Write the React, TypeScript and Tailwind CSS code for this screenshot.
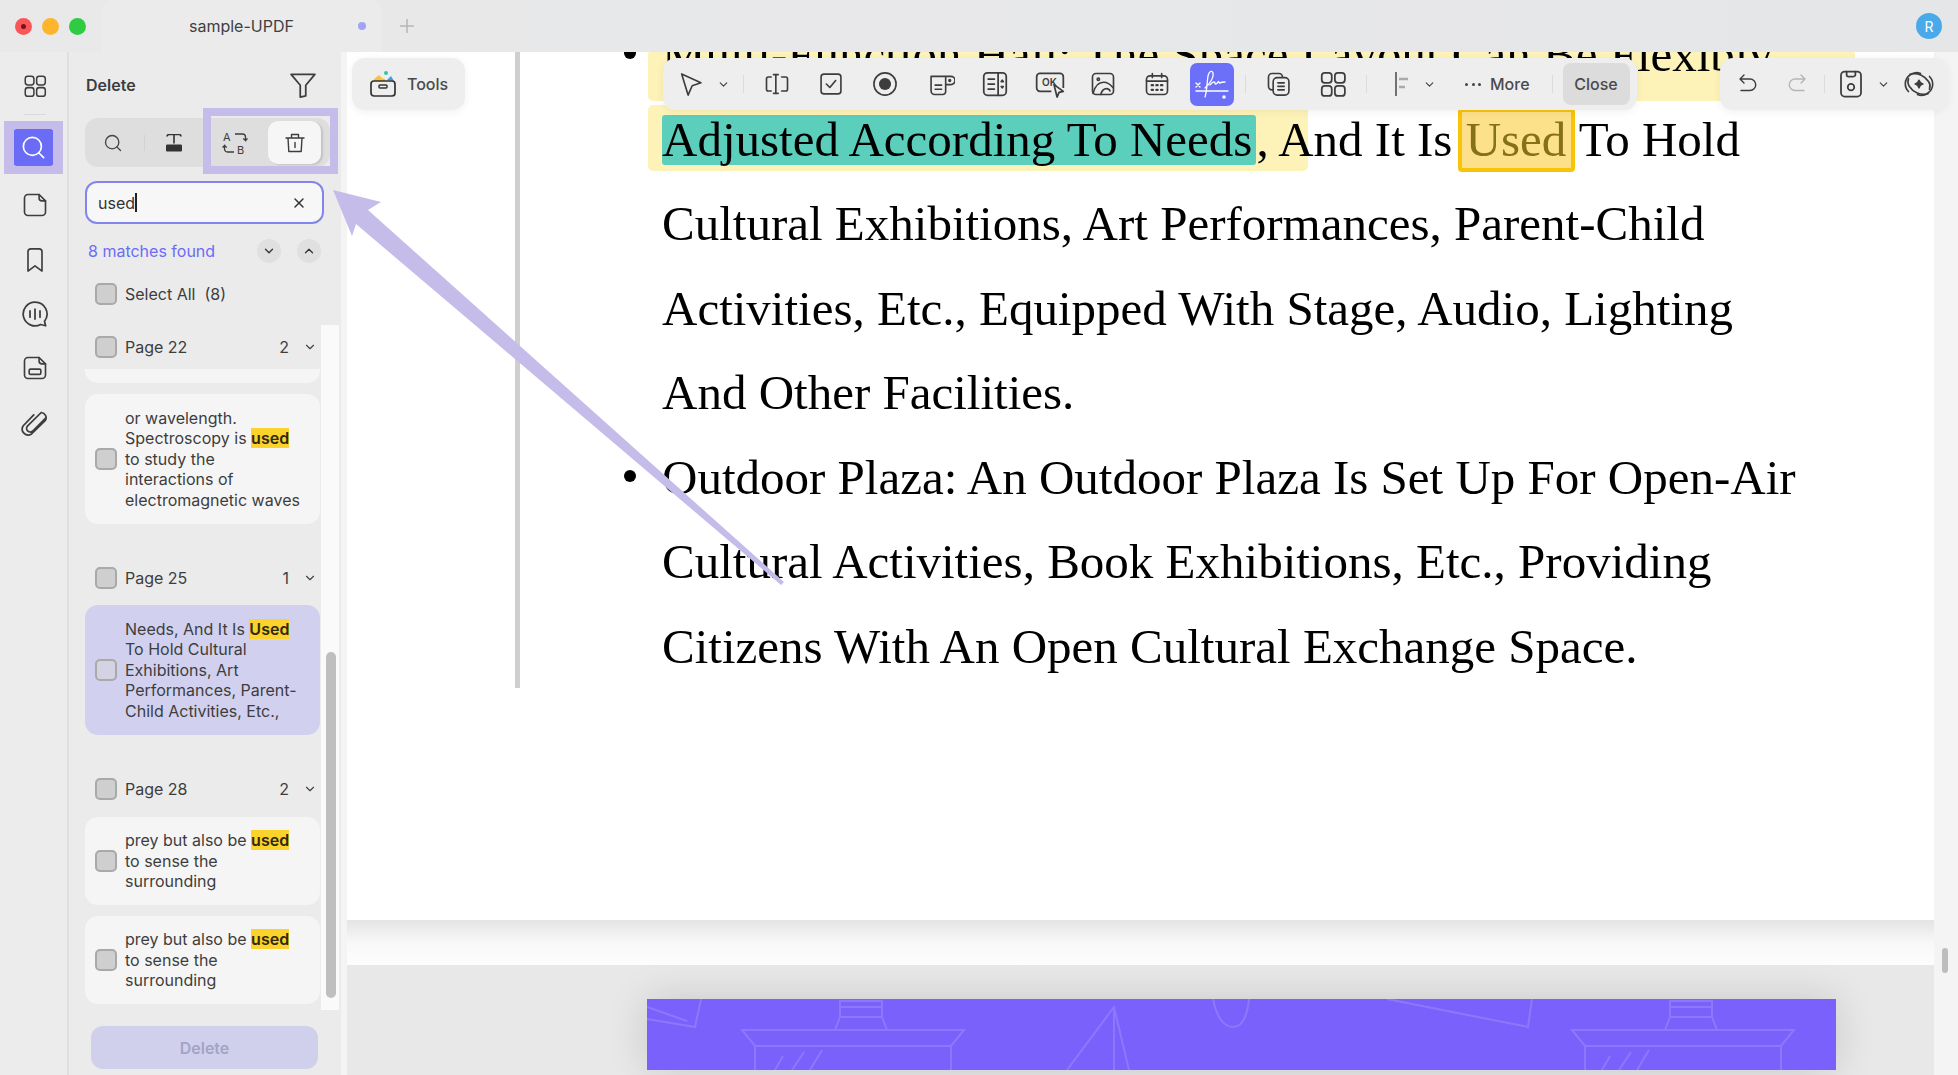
import React from 'react'
import { ChevronDown, ChevronUp, Search, X } from 'lucide-react'

const INK = '#3d3d3d'

const Icon: React.FC<{ size?: number; box?: number; color?: string; width?: number; className?: string; children: React.ReactNode }> = ({
  size = 26,
  box = 24,
  color = INK,
  width = 1.4,
  className,
  children,
}) => (
  <svg
    width={size}
    height={size}
    viewBox={`0 0 ${box} ${box}`}
    fill="none"
    stroke={color}
    strokeWidth={width}
    strokeLinecap="round"
    strokeLinejoin="round"
    className={className}>
    {children}
  </svg>
)

const Box: React.FC<{ on?: boolean }> = ({ on }) => (
  <span className={`block size-[22px] shrink-0 rounded-[5px] border-2 border-[#a9a9a9] ${on ? 'bg-[#d3d3e4]' : 'bg-[#cfcfcf]'}`} />
)

const Hit: React.FC<{ children: React.ReactNode }> = ({ children }) => (
  <span className="bg-[#fcd22c] font-semibold text-[#2e2a10]">{children}</span>
)

const PageRow: React.FC<{ label: string; count: number; className: string }> = ({ label, count, className }) => (
  <div className={`flex h-6 items-center pl-[10px] ${className}`}>
    <Box />
    <span className="ml-[8px] text-[#3d3d3d]">{label}</span>
    <span className="ml-auto text-[#3d3d3d]">{count}</span>
    <ChevronDown size={14} strokeWidth={2} className="mr-[3px] ml-[14px] text-[#444]" />
  </div>
)

const Card: React.FC<{ className: string; active?: boolean; children: React.ReactNode }> = ({ className, active, children }) => (
  <div
    className={`flex w-[235px] items-center rounded-[13px] pl-[10px] leading-[20.6px] text-[#3d3d3d] ${
      active ? 'bg-[#d1d1ef]' : 'bg-[#f5f5f5]'
    } ${className}`}>
    <Box on={active} />
    <div className="ml-[8px] whitespace-nowrap">{children}</div>
  </div>
)

const Rail: React.FC = () => (
  <aside className="flex w-[69px] shrink-0 flex-col items-center border-r-2 border-[#dfdfdf] bg-[#ececec] pt-[21px] pl-[3px]">
    <Icon size={26}>
      <rect x="3" y="3" width="8" height="8" rx="2.4" />
      <rect x="13.5" y="3" width="8" height="8" rx="2.4" />
      <rect x="3" y="13.5" width="8" height="8" rx="2.4" />
      <rect x="13.5" y="13.5" width="8" height="8" rx="2.4" />
    </Icon>
    <span className="mt-[15px] h-px w-[22px] bg-[#dadada]" />
    <span className="mt-[14px] -ml-[3px] flex h-[37px] w-[41px] items-center justify-center rounded-[4px] bg-[#6a6cf6]">
      <Search size={27} strokeWidth={1.5} className="text-white" />
    </span>
    <Icon size={28} className="mt-[25px]">
      <path d="M6 3h9.5L21 8.5V18a3 3 0 0 1-3 3H6a3 3 0 0 1-3-3V6a3 3 0 0 1 3-3z" />
      <path d="M15.5 3v3a2.5 2.5 0 0 0 2.5 2.5h3" />
    </Icon>
    <Icon size={28} className="mt-[27px]">
      <path d="M6 5a2.5 2.5 0 0 1 2.5-2.5h7A2.5 2.5 0 0 1 18 5v16.5l-6-4.5-6 4.5z" />
    </Icon>
    <Icon size={30} className="mt-[25px]">
      <path d="M12 2.5a9.5 9.5 0 1 0 4.5 17.9l4 1-.9-3.6A9.5 9.5 0 0 0 12 2.5z" />
      <path d="M8 9.5v5M12 8v8M16 9.5v5" />
    </Icon>
    <Icon size={28} className="mt-[25px]">
      <path d="M6 3h9.5L21 8.5V18a3 3 0 0 1-3 3H6a3 3 0 0 1-3-3V6a3 3 0 0 1 3-3z" />
      <path d="M15.5 3v3a2.5 2.5 0 0 0 2.5 2.5h3" />
      <rect x="7" y="13" width="10" height="4.5" rx="1.2" />
    </Icon>
    <Icon size={30} className="mt-[26px]">
      <path d="M20.5 8 10.2 18.4a2.9 2.9 0 0 1-4.1-4.1L17 3.6a4.2 4.2 0 0 1 3.3 6.3L9 21a4.8 4.8 0 0 1-6.4-6.8L11 5.5" />
    </Icon>
  </aside>
)

const SearchPanel: React.FC = () => (
  <section className="relative w-[272px] shrink-0 bg-[#ebebeb] pl-[16px] text-[16px]">
    <div className="flex h-[66px] items-center justify-between pr-[23px]">
      <span className="pl-[1px] text-[16px] font-semibold text-[#3d3d3d]">Delete</span>
      <Icon size={30}>
        <path d="M2.5 3.5h19l-7.3 8.7v8.5l-4.4 1v-9.5z" />
      </Icon>
    </div>

    <div className="flex h-[49px] w-[245px] items-center rounded-[13px] bg-[#dedede] pl-[18px]">
      <Search size={20} strokeWidth={1.6} className="text-[#444]" />
      <span className="ml-[21px] h-4 w-px bg-[#d2d2d2]" />
      <svg width="18" height="18" viewBox="0 0 18 18" className="ml-[20px]">
        <path d="M2 2.5a2 2 0 0 1 2-2h10a2 2 0 0 1 2 2M9 .5v9" fill="none" stroke="#333" strokeWidth="1.6" />
        <rect x="1" y="10.5" width="16" height="7" rx="1.2" fill="#333" />
      </svg>
      <svg width="26" height="26" viewBox="0 0 26 26" className="ml-[39px] font-['Inter',sans-serif] text-[11px]" fill="none" stroke="#3d3d3d" strokeWidth="1.3">
        <text x="1" y="10.500" fill="#3d3d3d" stroke="none">A</text>
        <text x="15" y="24" fill="#3d3d3d" stroke="none">B</text>
        <path d="M13 4h7.500a3 3 0 0 1 3 3v3.500l-2.200-2M23.500 10.500l2-2" />
        <path d="M12 22H5.500a3 3 0 0 1-3-3v-3.500l-2 2M2.500 15.500l2.200 2" />
      </svg>
      <span className="ml-[20px] flex h-[43px] w-[53px] items-center justify-center rounded-[10px] bg-[#f6f6f6] shadow-[2px_1px_2px_rgba(0,0,0,0.12)]">
        <Icon size={24}>
          <path d="M3 7h18M8.5 7V3.5h7V7M5 7l.8 13.5h12.4L19 7M12 11.5v5" />
        </Icon>
      </span>
    </div>

    <div className="mt-[14px] flex h-[43px] w-[239px] items-center rounded-[12px] border-2 border-[#8385ef] bg-[#f7f7f7] pr-[15px] pl-[11px] text-[#333]">
      <span>used</span>
      <span className="h-[19px] w-[2px] bg-[#222]" />
      <X size={16} strokeWidth={2.2} className="ml-auto text-[#333]" />
    </div>

    <div className="mt-[15px] flex h-6 w-[235px] items-center pl-[3px] text-[#6c6cf5]">
      <span>8 matches found</span>
      <span className="ml-auto flex size-6 items-center justify-center rounded-full bg-[#e0e0e0]">
        <ChevronDown size={14} strokeWidth={2.2} className="text-[#333]" />
      </span>
      <span className="mr-[-1px] ml-4 flex size-6 items-center justify-center rounded-full bg-[#e0e0e0]">
        <ChevronUp size={14} strokeWidth={2.2} className="text-[#333]" />
      </span>
    </div>

    <div className="mt-[19px] flex h-6 items-center pl-[10px]">
      <Box />
      <span className="ml-[8px] text-[#3d3d3d]">Select All&nbsp;&nbsp;(8)</span>
    </div>

    <PageRow label="Page 22" count={2} className="mt-[29px] w-[235px]" />
    <div className="mt-[10px] h-[14px] w-[235px] rounded-b-[13px] bg-[#f5f5f5]" />
    <Card className="mt-[11px] h-[130px]">
      or wavelength.
      <br />
      Spectroscopy is <Hit>used</Hit>
      <br />
      to study the
      <br />
      interactions of
      <br />
      electromagnetic waves
    </Card>

    <PageRow label="Page 25" count={1} className="mt-[42px] w-[235px]" />
    <Card active className="mt-[15px] h-[130px]">
      Needs, And It Is <Hit>Used</Hit>
      <br />
      To Hold Cultural
      <br />
      Exhibitions, Art
      <br />
      Performances, Parent-
      <br />
      Child Activities, Etc.,
    </Card>

    <PageRow label="Page 28" count={2} className="mt-[42px] w-[235px]" />
    <Card className="mt-[16px] h-[88px]">
      prey but also be <Hit>used</Hit>
      <br />
      to sense the
      <br />
      surrounding
    </Card>
    <Card className="mt-[11px] h-[88px]">
      prey but also be <Hit>used</Hit>
      <br />
      to sense the
      <br />
      surrounding
    </Card>

    <div className="mt-[22px] ml-[6px] flex h-[43px] w-[227px] items-center justify-center rounded-[12px] bg-[#d0d0ec] font-semibold text-[#a3a3c4]">
      Delete
    </div>

    {/* list scrollbar */}
    <div className="absolute top-[273px] left-[252px] h-[685px] w-[18px] bg-[#fafafa]">
      <div className="mt-[327px] ml-[5px] h-[346px] w-[10px] rounded-full bg-[#bfbfbf]" />
    </div>
  </section>
)

const Line: React.FC<{ bullet?: boolean; children: React.ReactNode }> = ({ bullet, children }) => (
  <div className="relative whitespace-nowrap">
    {bullet && <span className="absolute top-[34px] left-[-38px] size-[12px] rounded-full bg-black" />}
    {children}
  </div>
)

const DocumentPage: React.FC = () => (
  <div className="flex h-[868px] shrink-0 overflow-hidden bg-white">
    <div className="h-[636px] w-[173px] shrink-0 border-r-[5px] border-[#cfcfcf]" />
    <div className="relative -mt-[39px] pl-[142px] font-['Liberation_Serif',serif] text-[49px] leading-[84.5px] text-black">
      <span className="absolute top-[37px] left-[128px] h-[51px] w-[1207px] rounded-[5px] bg-[#fdf3b8]" />
      <span className="absolute top-[92px] left-[128px] h-[66px] w-[660px] rounded-[5px] bg-[#fdf3b8]" />
      <div className="relative">
        <Line bullet>Multi-Function Hall: The Space Layout Can Be Flexibly</Line>
        <Line>
          <span className="inline-block rounded-[3px] bg-[#5bcfbc] pr-[4px] leading-[50px]">Adjusted According To Needs</span>, And It Is{' '}
          <span className="-mr-[8px] -ml-[7px] inline-block rounded-[4px] border-[4px] border-[#f8c40a] bg-[#fde08a] pr-[5px] pl-[4px] leading-[56px] text-[#857117]">Used</span> To Hold
        </Line>
        <Line>Cultural Exhibitions, Art Performances, Parent-Child</Line>
        <Line>Activities, Etc., Equipped With Stage, Audio, Lighting</Line>
        <Line>And Other Facilities.</Line>
        <Line bullet>Outdoor Plaza: An Outdoor Plaza Is Set Up For Open-Air</Line>
        <Line>Cultural Activities, Book Exhibitions, Etc., Providing</Line>
        <Line>Citizens With An Open Cultural Exchange Space.</Line>
      </div>
    </div>
  </div>
)

const PurpleBanner: React.FC = () => (
  <svg viewBox="0 0 1189 71" className="block h-[71px] w-[1189px] shadow-[0_0_40px_rgba(0,0,0,0.14)]" fill="none" stroke="#8d78fd" strokeWidth="2">
    <rect width="1189" height="71" fill="#7b61fb" stroke="none" />
    <path d="M0 20 48 28 54 0M0 8l40 14" />
    <path d="M95 31h222l-13 16H108zM108 47v24M304 47v24M188 31l5-13h42l5 13M193 18V2h42v16M193 8h42" />
    <path d="M420 71 467 8l15 63M467 8v63" />
    <path d="M566 0c4 20 12 28 20 28s14-8 16-28M740 0l141 28 4-28" />
    <path d="M925 31h222l-13 16H938zM938 47v24M1134 47v24M1018 31l5-13h42l5 13M1023 18V2h42v16M1023 8h42" />
    <path d="M128 71l8-14M145 71l12-18M163 71l12-20M955 71l8-14M972 71l12-18M990 71l12-20" />
  </svg>
)

const ToolDivider: React.FC<{ className: string }> = ({ className }) => <span className={`h-[18px] w-px bg-[#dcdcdc] ${className}`} />

const EditToolbar: React.FC = () => (
  <div className="absolute top-[58px] left-[663px] flex h-[52px] w-[974px] items-center rounded-[13px] bg-[#eeeeee] pl-[14px] shadow-[0_2px_8px_rgba(0,0,0,0.06)]">
    <Icon size={28}>
      <path d="M4 3.500 20.500 11l-7.500 2.500-3.500 8z" />
    </Icon>
    <ChevronDown size={13} strokeWidth={2.2} className="ml-[12px] text-[#444]" />
    <ToolDivider className="ml-[13px]" />
    <Icon size={28} className="ml-[19px]">
      <path d="M7 6H4.500A1.500 1.500 0 0 0 3 7.500v9A1.500 1.500 0 0 0 4.500 18H7M16 6h3.500A1.500 1.500 0 0 1 21 7.500v9a1.500 1.500 0 0 1-1.500 1.500H16M9 4h4M9 20h4M11 4v16" />
    </Icon>
    <Icon size={28} className="ml-[26px]">
      <rect x="3.500" y="3.500" width="17" height="17" rx="2.500" />
      <path d="m8 12 3 3 5-6" />
    </Icon>
    <svg width="28" height="28" viewBox="0 0 24 24" className="ml-[26px]">
      <circle cx="12" cy="12" r="9.500" fill="none" stroke={INK} strokeWidth="1.400" />
      <circle cx="12" cy="12" r="5.200" fill={INK} />
    </svg>
    <Icon size={28} className="ml-[28px]">
      <path d="M3.500 5.500h17a2.500 2.500 0 0 1 0 7H16v6a2.500 2.500 0 0 1-2.500 2.500h-7A3 3 0 0 1 3.500 18zM16 5.500v7M7 13h5.500M7 16.500h5.500" />
      <circle cx="19.500" cy="9" r=".7" fill={INK} />
    </Icon>
    <Icon size={30} className="ml-[25px]">
      <rect x="3" y="3" width="18" height="18" rx="3" />
      <path d="M14.500 3v18M6.500 8h5M6.500 12h5M6.500 16h5M17.800 9l-.8 1h1.600zM17.800 15l-.8-1h1.600z" />
    </Icon>
    <svg width="32" height="32" viewBox="0 0 24 24" className="ml-[24px] font-['Inter',sans-serif] text-[7.500px] font-semibold" fill="none" stroke={INK} strokeWidth="1.300" strokeLinejoin="round">
      <path d="M13 17.500H4.500A2.500 2.500 0 0 1 2 15V6.500A2.500 2.500 0 0 1 4.500 4h15A2.500 2.500 0 0 1 22 6.500V15" />
      <text x="6" y="13.500" fill={INK} stroke="none">OK</text>
      <path d="M15 12.500l7 5-3.200.8-1.500 3.500z" fill="#eee" />
    </svg>
    <Icon size={28} className="ml-[23px]">
      <path d="M6 3h12a3 3 0 0 1 3 3v12a3 3 0 0 1-3 3H6a3 3 0 0 1-3-3V6a3 3 0 0 1 3-3z" />
      <path d="M3.500 20c1.500-6 5-9.500 9-9.500 3.500 0 6 2 8 4.500M10 21c1-3 3-5 5-5 1.500 0 2.500.8 3 2" />
      <circle cx="8" cy="8" r="1" />
    </Icon>
    <Icon size={28} className="ml-[26px]">
      <rect x="3" y="5" width="18" height="16" rx="3" />
      <path d="M3 9.500h18M8 3v3.500M16 3v3.500" />
      <path d="M7.500 13h1M11.500 13h1M15.500 13h1M7.500 17h1M11.500 17h1M15.500 17h1" strokeWidth="2" />
    </Icon>
    <span className="ml-[19px] flex h-[43px] w-[44px] items-center justify-center rounded-[7px] bg-[#6c70f8]">
      <svg width="38" height="36" viewBox="0 0 38 36" fill="none" stroke="#fff" strokeWidth="1.300" strokeLinecap="round">
        <path d="M3 17l4 4M7 17l-4 4M3 25h32" />
        <path d="M12 22c5-4 9-11 8-15-1-3-4-2-5 3-1 6-1 15-3 21M17 19c2-3 5-4 5-2s2 1 3-1 1 2 2 1 3-1 5-1" />
        <circle cx="31" cy="31" r="1.100" fill="#fff" />
      </svg>
    </span>
    <ToolDivider className="ml-[11px]" />
    <Icon size={28} className="ml-[19px]">
      <path d="M7 17H6a3 3 0 0 1-3-3V6a3 3 0 0 1 3-3h6a3 3 0 0 1 3 3" />
      <rect x="7" y="6.500" width="13.500" height="15" rx="3.500" />
      <path d="M11 11h5.500M11 14h5.500M11 17h5.500" />
    </Icon>
    <Icon size={30} className="ml-[25px]">
      <rect x="3" y="3" width="8" height="8" rx="2.400" />
      <rect x="13.500" y="3" width="8" height="8" rx="2.400" />
      <rect x="3" y="13.500" width="8" height="8" rx="2.400" />
      <rect x="13.500" y="13.500" width="8" height="8" rx="2.400" />
    </Icon>
    <ToolDivider className="ml-[18px]" />
    <svg width="20" height="26" viewBox="0 0 20 26" className="ml-[28px]">
      <path d="M1 1v24" stroke={INK} strokeWidth="1.400" />
      <path d="M4 8h9M4 16h6" stroke="#aaa" strokeWidth="2.400" />
    </svg>
    <ChevronDown size={13} strokeWidth={2.2} className="ml-[8px] text-[#444]" />
    <span className="ml-[29px] flex w-[16px] justify-between">
      <i className="size-[3px] rounded-full bg-[#444]" />
      <i className="size-[3px] rounded-full bg-[#444]" />
      <i className="size-[3px] rounded-full bg-[#444]" />
    </span>
    <span className="ml-[9px] font-['Inter',sans-serif] text-[16px] font-medium text-[#4a4a4a]">More</span>
    <ToolDivider className="ml-[22px]" />
    <span className="ml-[10px] flex h-[42px] w-[67px] items-center justify-center rounded-[8px] bg-[#dcdcdc] font-['Inter',sans-serif] text-[16px] font-medium text-[#4a4a4a]">
      Close
    </span>
  </div>
)

const FileToolbar: React.FC = () => (
  <div className="absolute top-[58px] left-[1720px] flex h-[52px] w-[228px] items-center rounded-[13px] bg-[#eeeeee] pl-[16px] shadow-[0_2px_8px_rgba(0,0,0,0.06)]">
    <Icon size={24}>
      <path d="M8 3 4 7l4 4M4 7h10a5.500 5.500 0 0 1 0 11.500H5" />
    </Icon>
    <Icon size={24} color="#b5b5b5" className="ml-[25px]">
      <path d="m16 3 4 4-4 4M20 7H10a5.500 5.500 0 0 0 0 11.500h9" />
    </Icon>
    <span className="ml-[15px] h-[18px] w-px bg-[#dcdcdc]" />
    <Icon size={30} className="ml-[11px]">
      <rect x="4" y="2" width="16" height="20" rx="3" />
      <path d="M8.500 2v2.500a1.500 1.500 0 0 0 1.500 1.500h4a1.500 1.500 0 0 0 1.500-1.500V2" />
      <circle cx="12" cy="14.500" r="2.600" />
    </Icon>
    <ChevronDown size={13} strokeWidth={2.2} className="ml-[11px] text-[#444]" />
    <Icon size={36} className="ml-[11px]" width={1.1}>
      <path d="M5 17c-3-3-3-8 1-11 2-1.500 5-2 7-1M19 7c3 3 3 8-1 11-2 1.500-5 2-7 1" />
      <path d="M6 5.500c5-1.500 10 1 12.500 5 1 1.500 1 3.500.5 5M18 18.500c-5 1.500-10-1-12.500-5-1-1.500-1-3.500-.5-5" />
      <path d="M12 9.500c.4 1.600.9 2.100 2.500 2.500-1.600.4-2.100.9-2.500 2.500-.4-1.600-.9-2.100-2.500-2.500 1.600-.4 2.100-.9 2.500-2.500z" fill={INK} />
    </Icon>
  </div>
)

export default function App() {
  return (
    <div className="relative flex h-[1075px] w-[1958px] flex-col overflow-hidden bg-[#ececec] font-['Inter',sans-serif]">
      <header className="flex h-[52px] shrink-0 items-center bg-gradient-to-r from-[#e9e9ea] to-[#e5e6e8] pl-[15px]">
        <span className="flex size-[17px] items-center justify-center rounded-full bg-[#f8575a]">
          <i className="size-[5px] rounded-full bg-[#7e1214]" />
        </span>
        <span className="ml-[10px] size-[17px] rounded-full bg-[#fdb52c]" />
        <span className="ml-[10px] size-[17px] rounded-full bg-[#2ecb43]" />
        <div className="ml-[16px] flex h-[52px] w-[280px] items-center rounded-t-[12px] bg-[#ebebeb] pl-[87px]">
          <span className="text-[16px] text-[#3f3f3f]">sample-UPDF</span>
          <span className="ml-[64px] size-2 rounded-full bg-[#a2a2fb]" />
        </div>
        <svg width="14" height="14" viewBox="0 0 14 14" className="ml-[18px]">
          <path d="M7 0v14M0 7h14" stroke="#b5b5b5" strokeWidth="1.500" />
        </svg>
        <span className="mr-[16px] ml-auto flex size-[26px] items-center justify-center rounded-full bg-[#4aa9e8] text-[14px] text-white">R</span>
      </header>

      <div className="flex min-h-0 flex-1">
        <Rail />
        <SearchPanel />
        <main className="flex min-w-0 flex-1 bg-[#f4f4f4] pl-[6px]">
          <div className="flex w-[1587px] shrink-0 flex-col">
            <DocumentPage />
            <div className="h-[45px] shrink-0 bg-gradient-to-b from-[#e4e4e4] via-[#f8f8f8] to-[#fdfdfd]" />
            <div className="min-h-0 flex-1 overflow-hidden bg-[#e8e8e8] pt-[34px] pl-[300px]">
              <PurpleBanner />
            </div>
          </div>
          <div className="relative w-[24px]">
            <span className="absolute top-[896px] left-[8px] h-[25px] w-[6px] rounded-full bg-[#bdbdbd]" />
          </div>
        </main>
      </div>

      {/* floating controls and annotations */}
      <div className="absolute top-[58px] left-[352px] flex h-[52px] w-[113px] items-center rounded-[13px] bg-[#eeeeee] pl-[17px] shadow-[0_2px_8px_rgba(0,0,0,0.06)]">
        <svg width="28" height="28" viewBox="0 0 28 28">
          <path d="M5 9c2-1 3-3 5-4l3 3 3 1v2H5z" fill="#f7c33a" />
          <path d="M18 10l4-4 3 5z" fill="#3aa0e8" />
          <circle cx="17" cy="3" r="2" fill="#35c4a5" />
          <rect x="2" y="11" width="24" height="15" rx="3" fill="#eee" stroke="#333" strokeWidth="1.700" />
          <rect x="10" y="15" width="8" height="3" rx="1" fill="none" stroke="#333" strokeWidth="1.500" />
        </svg>
        <span className="ml-[10px] text-[16px] font-medium text-[#4a4a4a]">Tools</span>
      </div>
      <EditToolbar />
      <FileToolbar />

      <span className="absolute top-[121px] left-[4px] h-[53px] w-[59px] border-x-[10px] border-y-[8px] border-[#c5bcea]" />
      <span className="absolute top-[108px] left-[203px] h-[66px] w-[135px] border-[8px] border-[#c5bcea]" />
      <svg width="1958" height="1075" className="pointer-events-none absolute top-0 left-0">
        <path d="M333 190 381 202 368 210 784 582 781 585 356 224 352 236z" fill="#c5bcea" />
      </svg>
    </div>
  )
}
